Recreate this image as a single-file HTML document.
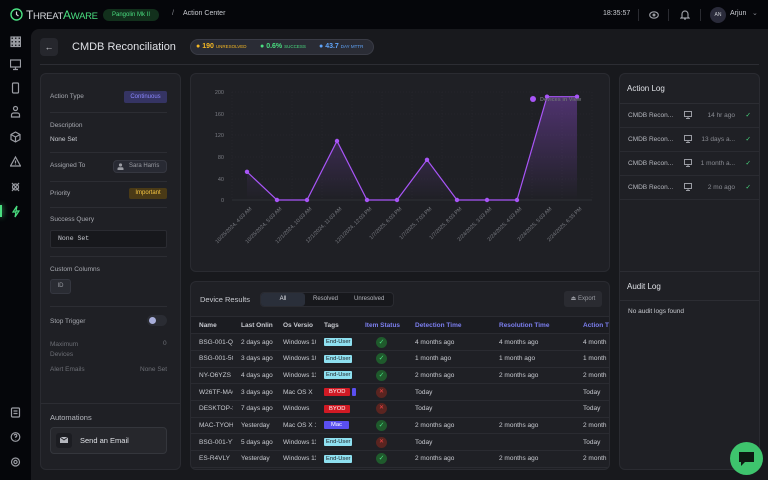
<!DOCTYPE html>
<html><head><meta charset="utf-8"><style>
*{box-sizing:border-box;margin:0;padding:0}
body{width:768px;height:480px;overflow:hidden;background:#05060a;font-family:"Liberation Sans",sans-serif;color:#c9cbd1;position:relative;font-size:7px}
.abs{position:absolute}
.top{left:0;top:0;width:768px;height:30px;background:#05060a}
.main{left:31px;top:29px;width:737px;height:451px;background:#18191d;border-top-left-radius:8px}
.panel{background:#1f2025;border:1px solid #2a2b31;border-radius:6px}
.lbl{color:#a7a9b0;font-size:6.5px}
.hr{height:1px;background:#2c2d33}
.ic{stroke:#9a9ca3;fill:none;stroke-width:1.2}
table{border-collapse:collapse;font-size:6.5px}
td,th{height:16.7px;text-align:left;white-space:nowrap;overflow:hidden;padding-left:8px}
th{font-weight:bold;color:#c9cbd1}
tr{border-bottom:1px solid #2a2b31}
.tag{display:inline-block;font-size:5.8px;padding:1px 2px;border-radius:1px}
.eu{background:#8ee0f0;color:#1f2025}
.by{background:#d11a24;color:#fff;padding:1px 5px}
.mac{background:#5a4ff0;color:#fff;padding:1px 7px}
.st{padding-left:19px}
.ok,.no{display:inline-block;width:11px;height:11px;border-radius:50%;text-align:center;line-height:11px;font-size:7px}
.ok{background:#1f5a2c;color:#4ade80}
.no{background:#5a2420;color:#ef4444;font-size:6px}
.mon{position:absolute;left:64px;top:7px}
</style></head><body>
<div class="abs top"></div>
<svg class="abs" style="left:10px;top:8px" width="13" height="13" viewBox="0 0 13 13"><circle cx="6.5" cy="6.5" r="5.5" stroke="#4ade80" stroke-width="1.4" fill="none"/><path d="M6.5 3.5v3l2 1.5" stroke="#cfd2d8" stroke-width="1.2" fill="none"/></svg>
<div class="abs" style="left:26px;top:8px;font-size:12px;color:#d6d8dd;letter-spacing:-0.3px">T<span style="font-size:9.5px">HREAT</span><span style="color:#4ade80">A<span style="font-size:9.5px">WARE</span></span></div>
<div class="abs" style="left:103px;top:9px;width:56px;height:12px;border-radius:6px;background:#12301c;color:#4ade80;font-size:6px;line-height:12px;text-align:center">Pangolin Mk II</div>
<div class="abs" style="left:172px;top:10px;color:#8a8c93;font-size:7px">/</div>
<div class="abs" style="left:183px;top:10px;color:#c9cbd1;font-size:7px">Action Center</div>
<div class="abs" style="left:603px;top:10px;color:#c9cbd1;font-size:7px">18:35:57</div>
<div class="abs" style="left:638px;top:9px;width:1px;height:12px;background:#2a2b31"></div>
<svg class="abs" style="left:649px;top:10px" width="10" height="10" viewBox="0 0 10 10"><ellipse cx="5" cy="5" rx="4.3" ry="3.2" class="ic"/><circle cx="5" cy="5" r="1.5" fill="#9a9ca3"/></svg>
<div class="abs" style="left:668px;top:9px;width:1px;height:12px;background:#2a2b31"></div>
<svg class="abs" style="left:680px;top:9px" width="10" height="11" viewBox="0 0 10 11"><path d="M2 8V5a3 3 0 0 1 6 0v3l1 1H1z M4 10h2" class="ic"/></svg>
<div class="abs" style="left:700px;top:9px;width:1px;height:12px;background:#2a2b31"></div>
<div class="abs" style="left:710px;top:7px;width:16px;height:16px;border-radius:50%;background:#2a2b3a;color:#c9cbd1;font-size:5px;line-height:16px;text-align:center">AN</div>
<div class="abs" style="left:730px;top:10px;color:#c9cbd1;font-size:7px">Arjun</div>
<div class="abs" style="left:752px;top:9px;color:#8a8c93;font-size:7px">⌄</div>

<svg class="abs" style="left:10px;top:36px" width="11" height="185" viewBox="0 0 11 185">
<g class="ic" stroke-width="1">
<rect x="1" y="1" width="2.5" height="2.5"/><rect x="4.5" y="1" width="2.5" height="2.5"/><rect x="8" y="1" width="2.5" height="2.5"/><rect x="1" y="4.5" width="2.5" height="2.5"/><rect x="4.5" y="4.5" width="2.5" height="2.5"/><rect x="8" y="4.5" width="2.5" height="2.5"/><rect x="1" y="8" width="2.5" height="2.5"/><rect x="4.5" y="8" width="2.5" height="2.5"/><rect x="8" y="8" width="2.5" height="2.5"/>
<rect x="0.5" y="24" width="10" height="7"/><path d="M5.5 31v2M3 33.5h5"/>
<rect x="2.5" y="47" width="6" height="10" rx="1"/>
<circle cx="5.5" cy="72.5" r="2"/><path d="M1.5 81v-2a2 2 0 0 1 2-2h4a2 2 0 0 1 2 2v2z"/>
<path d="M5.5 96l4.5 2.5v5L5.5 106 1 103.5v-5zM1 98.5l4.5 2.5 4.5-2.5M5.5 101v5"/>
<path d="M5.5 121l5 9H.5zM5.5 124.5v3M5.5 128.5v.5"/>
<circle cx="5.5" cy="151" r="3"/><path d="M2 147l7 8M9 147l-7 8"/>
</g>
<path d="M7 170l-4 6h3l-1 5 4-6H6z" stroke="#4ade80" fill="none" stroke-width="1.2"/>
</svg>
<div class="abs" style="left:0;top:205px;width:2px;height:12px;background:#4ade80;box-shadow:0 0 6px #4ade80"></div>
<svg class="abs" style="left:10px;top:407px" width="11" height="62" viewBox="0 0 11 62"><g class="ic" stroke-width="1"><rect x="1.5" y="1" width="8" height="9" rx="1"/><path d="M3.5 4h4M3.5 6.5h4"/><circle cx="5.5" cy="30" r="4.3"/><path d="M4.2 28.5a1.3 1.3 0 1 1 1.3 1.5v.8M5.5 32v.3"/><circle cx="5.5" cy="55" r="1.6"/><circle cx="5.5" cy="55" r="4"/></g></svg>

<div class="abs main"></div>
<div class="abs" style="left:40px;top:38px;width:18px;height:18px;border-radius:4px;background:#26272d;color:#c9cbd1;text-align:center;line-height:18px;font-size:9px">←</div>
<div class="abs" style="left:72px;top:41px;font-size:11px;color:#dfe1e6">CMDB Reconciliation</div>
<div class="abs" style="left:190px;top:39px;width:184px;height:16px;border-radius:8px;background:#2a2c35;border:1px solid #3a3c46;font-size:7px;line-height:14px;white-space:nowrap">
<span style="position:absolute;left:5px;color:#f5b824">● <b>190</b> <span style="font-size:4.5px">UNRESOLVED</span></span>
<span style="position:absolute;left:69px;color:#4ade80">● <b>0.6%</b> <span style="font-size:4.5px">SUCCESS</span></span>
<span style="position:absolute;left:128px;color:#60a5fa">● <b>43.7</b> <span style="font-size:4.5px">DAY MTTR</span></span>
</div>
<div class="abs hr" style="left:40px;top:64px;width:719px"></div>

<div class="abs panel" style="left:40px;top:73px;width:141px;height:397px"></div>
<div class="abs lbl" style="left:50px;top:93px">Action Type</div>
<div class="abs" style="left:124px;top:91px;width:43px;height:12px;border-radius:2px;background:#353463;color:#8b87ff;font-size:6px;line-height:12px;text-align:center">Continuous</div>
<div class="abs hr" style="left:50px;top:112px;width:117px"></div>
<div class="abs lbl" style="left:50px;top:122px">Description</div>
<div class="abs lbl" style="left:50px;top:136px;color:#c9cbd1">None Set</div>
<div class="abs hr" style="left:50px;top:152px;width:117px"></div>
<div class="abs lbl" style="left:50px;top:162px">Assigned To</div>
<div class="abs" style="left:113px;top:160px;width:54px;height:13px;border-radius:4px;background:#282a33;border:1px solid #353740;color:#9a9ca3;font-size:6px;line-height:11px;padding-left:15px">Sara Harris</div>
<svg class="abs" style="left:117px;top:163px" width="7" height="7" viewBox="0 0 7 7"><circle cx="3.5" cy="2" r="1.6" fill="#9a9ca3"/><path d="M0.5 7v-1.2a1.5 1.5 0 0 1 1.5-1.5h3a1.5 1.5 0 0 1 1.5 1.5V7z" fill="#9a9ca3"/></svg>
<div class="abs hr" style="left:50px;top:181px;width:117px"></div>
<div class="abs lbl" style="left:50px;top:190px">Priority</div>
<div class="abs" style="left:129px;top:188px;width:38px;height:11px;border-radius:2px;background:#4a3a16;color:#f5c542;font-size:6px;line-height:11px;text-align:center">Important</div>
<div class="abs hr" style="left:50px;top:207px;width:117px"></div>
<div class="abs lbl" style="left:50px;top:216px">Success Query</div>
<div class="abs" style="left:50px;top:230px;width:117px;height:18px;border-radius:2px;background:#17181c;border:1px solid #2a2b31;font-family:'Liberation Mono',monospace;font-size:6.5px;color:#c9cbd1;line-height:16px;padding-left:7px">None Set</div>
<div class="abs hr" style="left:50px;top:256px;width:117px"></div>
<div class="abs lbl" style="left:50px;top:266px">Custom Columns</div>
<div class="abs" style="left:50px;top:279px;width:21px;height:15px;border-radius:3px;background:#2a2c33;border:1px solid #353740;color:#9a9ca3;font-size:6px;text-align:center;line-height:13px">ID</div>
<div class="abs hr" style="left:50px;top:306px;width:117px"></div>
<div class="abs lbl" style="left:50px;top:318px">Stop Trigger</div>
<div class="abs" style="left:147px;top:315px;width:20px;height:11px;border-radius:6px;background:#2a2c33"></div>
<div class="abs" style="left:149px;top:317px;width:7px;height:7px;border-radius:50%;background:#a8aeda"></div>
<div class="abs lbl" style="left:50px;top:340px;color:#6c6e75;line-height:10px">Maximum<br>Devices</div>
<div class="abs lbl" style="left:163px;top:340px;color:#6c6e75">0</div>
<div class="abs lbl" style="left:50px;top:366px;color:#6c6e75">Alert Emails</div>
<div class="abs lbl" style="left:140px;top:366px;color:#6c6e75">None Set</div>
<div class="abs hr" style="left:41px;top:403px;width:139px"></div>
<div class="abs" style="left:50px;top:413px;font-size:7.5px;color:#b4b6bd">Automations</div>
<div class="abs" style="left:50px;top:427px;width:117px;height:27px;border-radius:4px;background:#26272c;border:1px solid #34363c"></div>
<div class="abs" style="left:56px;top:433px;width:16px;height:15px;border-radius:3px;background:#1c1d22"></div>
<svg class="abs" style="left:60px;top:437px" width="8" height="7" viewBox="0 0 8 7"><rect x="0" y="0" width="8" height="6" fill="#b4b6bd"/><path d="M0 0l4 3 4-3" stroke="#1c1d22" fill="none" stroke-width="0.8"/></svg>
<div class="abs" style="left:80px;top:436px;font-size:7.5px;color:#dfe1e6">Send an Email</div>

<div class="abs panel" style="left:190px;top:73px;width:420px;height:199px"></div>
<svg class="abs" style="left:190px;top:73px" width="420" height="199">
<defs><linearGradient id="g" x1="0" y1="0" x2="0" y2="1"><stop offset="0" stop-color="#a855f7" stop-opacity=".35"/><stop offset="1" stop-color="#a855f7" stop-opacity="0"/></linearGradient></defs>
<g stroke="#2a2b31" stroke-dasharray="1 2" stroke-width="0.6">
<path d="M42 19h360M42 41h360M42 62h360M42 84h360M42 106h360"/>
<path d="M42 19v108M72 19v108M102 19v108M132 19v108M162 19v108M192 19v108M222 19v108M252 19v108M282 19v108M312 19v108M342 19v108M372 19v108M402 19v108"/>
</g>
<path d="M42 127h360" stroke="#34353b" stroke-width="0.7"/>
<g font-size="5.5" fill="#7a7c83" text-anchor="end"><text x="34" y="21">200</text><text x="34" y="43">160</text><text x="34" y="64">120</text><text x="34" y="86">80</text><text x="34" y="108">40</text><text x="34" y="129">0</text></g>
<path d="M57 98.8L87 127L117 127L147 68L177 127L207 127L237 86.8L267 127L297 127L327 127L357 23.7L387 23.7L387 127L57 127Z" fill="url(#g)"/>
<path d="M57 98.8L87 127L117 127L147 68L177 127L207 127L237 86.8L267 127L297 127L327 127L357 23.7L387 23.7" stroke="#a855f7" stroke-width="1.2" fill="none"/>
<g fill="#a855f7"><circle cx="57" cy="98.8" r="2.2"/><circle cx="87" cy="127" r="2.2"/><circle cx="117" cy="127" r="2.2"/><circle cx="147" cy="68" r="2.2"/><circle cx="177" cy="127" r="2.2"/><circle cx="207" cy="127" r="2.2"/><circle cx="237" cy="86.8" r="2.2"/><circle cx="267" cy="127" r="2.2"/><circle cx="297" cy="127" r="2.2"/><circle cx="327" cy="127" r="2.2"/><circle cx="357" cy="23.7" r="2.2"/><circle cx="387" cy="23.7" r="2.2"/><circle cx="343" cy="26" r="3"/></g>
<text x="350" y="28" font-size="5.5" fill="#6c6e75" font-weight="bold">Devices in View</text>
<g font-size="5.3" fill="#7a7c83" text-anchor="end">
<text transform="translate(62,136) rotate(-45)">10/25/2024, 4:03 AM</text>
<text transform="translate(92,136) rotate(-45)">10/25/2024, 5:03 AM</text>
<text transform="translate(122,136) rotate(-45)">12/1/2024, 10:03 AM</text>
<text transform="translate(152,136) rotate(-45)">12/1/2024, 11:03 AM</text>
<text transform="translate(182,136) rotate(-45)">12/1/2024, 12:03 PM</text>
<text transform="translate(212,136) rotate(-45)">1/7/2025, 6:03 PM</text>
<text transform="translate(242,136) rotate(-45)">1/7/2025, 7:03 PM</text>
<text transform="translate(272,136) rotate(-45)">1/7/2025, 8:03 PM</text>
<text transform="translate(302,136) rotate(-45)">2/24/2025, 3:03 AM</text>
<text transform="translate(332,136) rotate(-45)">2/24/2025, 4:03 AM</text>
<text transform="translate(362,136) rotate(-45)">2/24/2025, 5:03 AM</text>
<text transform="translate(392,136) rotate(-45)">2/24/2025, 6:35 PM</text>
</g>
</svg>

<div class="abs panel" style="left:190px;top:281px;width:420px;height:189px;overflow:hidden">
<div class="abs" style="left:9px;top:13px;font-size:7.5px;color:#c9cbd1">Device Results</div>
<div class="abs" style="left:69px;top:10px;width:134px;height:15px;border-radius:4px;background:#17181c;border:1px solid #2a2b31"></div>
<div class="abs" style="left:70px;top:11px;width:44px;height:13px;border-radius:3px;background:#2a2f3a;color:#dfe1e6;font-size:6px;text-align:center;line-height:13px">All</div>
<div class="abs" style="left:122px;top:14px;font-size:6px;color:#b4b6bd">Resolved</div>
<div class="abs" style="left:163px;top:14px;font-size:6px;color:#b4b6bd">Unresolved</div>
<div class="abs" style="left:373px;top:9px;width:38px;height:16px;border-radius:3px;background:#2a2b31;color:#9a9ca3;font-size:6px;text-align:center;line-height:16px">⏏ Export</div>
<div class="abs" style="left:0;top:34px;width:420px;height:1px;background:#2a2b31"></div>
<table class="abs" style="left:0;top:35px;width:440px;table-layout:fixed">
<colgroup><col style="width:42px"><col style="width:42px"><col style="width:41px"><col style="width:41px"><col style="width:50px"><col style="width:84px"><col style="width:84px"><col style="width:56px"></colgroup>
<tr style="background:#1b1c21"><th>Name</th><th>Last Onlin</th><th>Os Versio</th><th>Tags</th><th style="color:#7c7ff0">Item Status</th><th style="color:#7c7ff0">Detection Time</th><th style="color:#7c7ff0">Resolution Time</th><th style="color:#7c7ff0">Action Ti</th></tr>
<tr><td>BSG-001-Q6</td><td>2 days ago</td><td>Windows 10</td><td><span class="tag eu">End-User</span></td><td class="st"><span class="ok">✓</span></td><td>4 months ago</td><td>4 months ago</td><td>4 month</td></tr>
<tr><td>BSG-001-5C</td><td>3 days ago</td><td>Windows 10</td><td><span class="tag eu">End-User</span></td><td class="st"><span class="ok">✓</span></td><td>1 month ago</td><td>1 month ago</td><td>1 month</td></tr>
<tr><td>NY-O6YZS</td><td>4 days ago</td><td>Windows 11</td><td><span class="tag eu">End-User</span></td><td class="st"><span class="ok">✓</span></td><td>2 months ago</td><td>2 months ago</td><td>2 month</td></tr>
<tr><td>W26TF-MAC</td><td>3 days ago</td><td>Mac OS X</td><td><span class="tag by">BYOD</span> <span class="tag" style="background:#5a4ff0;padding:1px 1px">&nbsp;</span></td><td class="st"><span class="no">✕</span></td><td>Today</td><td></td><td>Today</td></tr>
<tr><td>DESKTOP-S</td><td>7 days ago</td><td>Windows</td><td><span class="tag by">BYOD</span></td><td class="st"><span class="no">✕</span></td><td>Today</td><td></td><td>Today</td></tr>
<tr><td>MAC-TYOHI</td><td>Yesterday</td><td>Mac OS X 1</td><td><span class="tag mac">Mac</span></td><td class="st"><span class="ok">✓</span></td><td>2 months ago</td><td>2 months ago</td><td>2 month</td></tr>
<tr><td>BSG-001-Y7</td><td>5 days ago</td><td>Windows 11</td><td><span class="tag eu">End-User</span></td><td class="st"><span class="no">✕</span></td><td>Today</td><td></td><td>Today</td></tr>
<tr><td>ES-R4VLY</td><td>Yesterday</td><td>Windows 11</td><td><span class="tag eu">End-User</span></td><td class="st"><span class="ok">✓</span></td><td>2 months ago</td><td>2 months ago</td><td>2 month</td></tr>
</table>
</div>

<div class="abs panel" style="left:619px;top:73px;width:141px;height:397px"></div>
<div class="abs" style="left:627px;top:84px;font-size:8px;color:#dfe1e6">Action Log</div>
<div class="abs hr" style="left:620px;top:103px;width:139px"></div>
<div class="abs" style="left:620px;top:104px;width:139px;font-size:6.5px;color:#b4b6bd">
<div style="position:relative;height:24px;border-bottom:1px solid #2a2b31"><span class="abs" style="left:8px;top:8px">CMDB Recon...</span><svg class="mon" width="8" height="8" viewBox="0 0 8 8"><rect x="0.5" y="0.5" width="7" height="5" fill="none" stroke="#9a9ca3"/><path d="M4 5.5v1.5M2 7.5h4" stroke="#9a9ca3"/></svg><span class="abs" style="right:24px;top:8px;color:#8a8c93">14 hr ago</span><span class="abs" style="right:8px;top:7px;color:#4ade80">✓</span></div>
<div style="position:relative;height:24px;border-bottom:1px solid #2a2b31"><span class="abs" style="left:8px;top:8px">CMDB Recon...</span><svg class="mon" width="8" height="8" viewBox="0 0 8 8"><rect x="0.5" y="0.5" width="7" height="5" fill="none" stroke="#9a9ca3"/><path d="M4 5.5v1.5M2 7.5h4" stroke="#9a9ca3"/></svg><span class="abs" style="right:24px;top:8px;color:#8a8c93">13 days a...</span><span class="abs" style="right:8px;top:7px;color:#4ade80">✓</span></div>
<div style="position:relative;height:24px;border-bottom:1px solid #2a2b31"><span class="abs" style="left:8px;top:8px">CMDB Recon...</span><svg class="mon" width="8" height="8" viewBox="0 0 8 8"><rect x="0.5" y="0.5" width="7" height="5" fill="none" stroke="#9a9ca3"/><path d="M4 5.5v1.5M2 7.5h4" stroke="#9a9ca3"/></svg><span class="abs" style="right:24px;top:8px;color:#8a8c93">1 month a...</span><span class="abs" style="right:8px;top:7px;color:#4ade80">✓</span></div>
<div style="position:relative;height:24px;border-bottom:1px solid #2a2b31"><span class="abs" style="left:8px;top:8px">CMDB Recon...</span><svg class="mon" width="8" height="8" viewBox="0 0 8 8"><rect x="0.5" y="0.5" width="7" height="5" fill="none" stroke="#9a9ca3"/><path d="M4 5.5v1.5M2 7.5h4" stroke="#9a9ca3"/></svg><span class="abs" style="right:24px;top:8px;color:#8a8c93">2 mo ago</span><span class="abs" style="right:8px;top:7px;color:#4ade80">✓</span></div>
</div>
<div class="abs hr" style="left:620px;top:271px;width:139px"></div>
<div class="abs" style="left:627px;top:282px;font-size:8px;color:#dfe1e6">Audit Log</div>
<div class="abs hr" style="left:620px;top:300px;width:139px"></div>
<div class="abs" style="left:628px;top:308px;font-size:6.5px;color:#c9cbd1">No audit logs found</div>

<div class="abs" style="left:730px;top:442px;width:33px;height:33px;border-radius:50%;background:#3ec46d"></div>
<svg class="abs" style="left:738px;top:451px" width="17" height="16" viewBox="0 0 17 16"><path d="M1 1h15v10H7l-4 4v-4H1z" fill="#0d1a12"/></svg>
</body></html>
